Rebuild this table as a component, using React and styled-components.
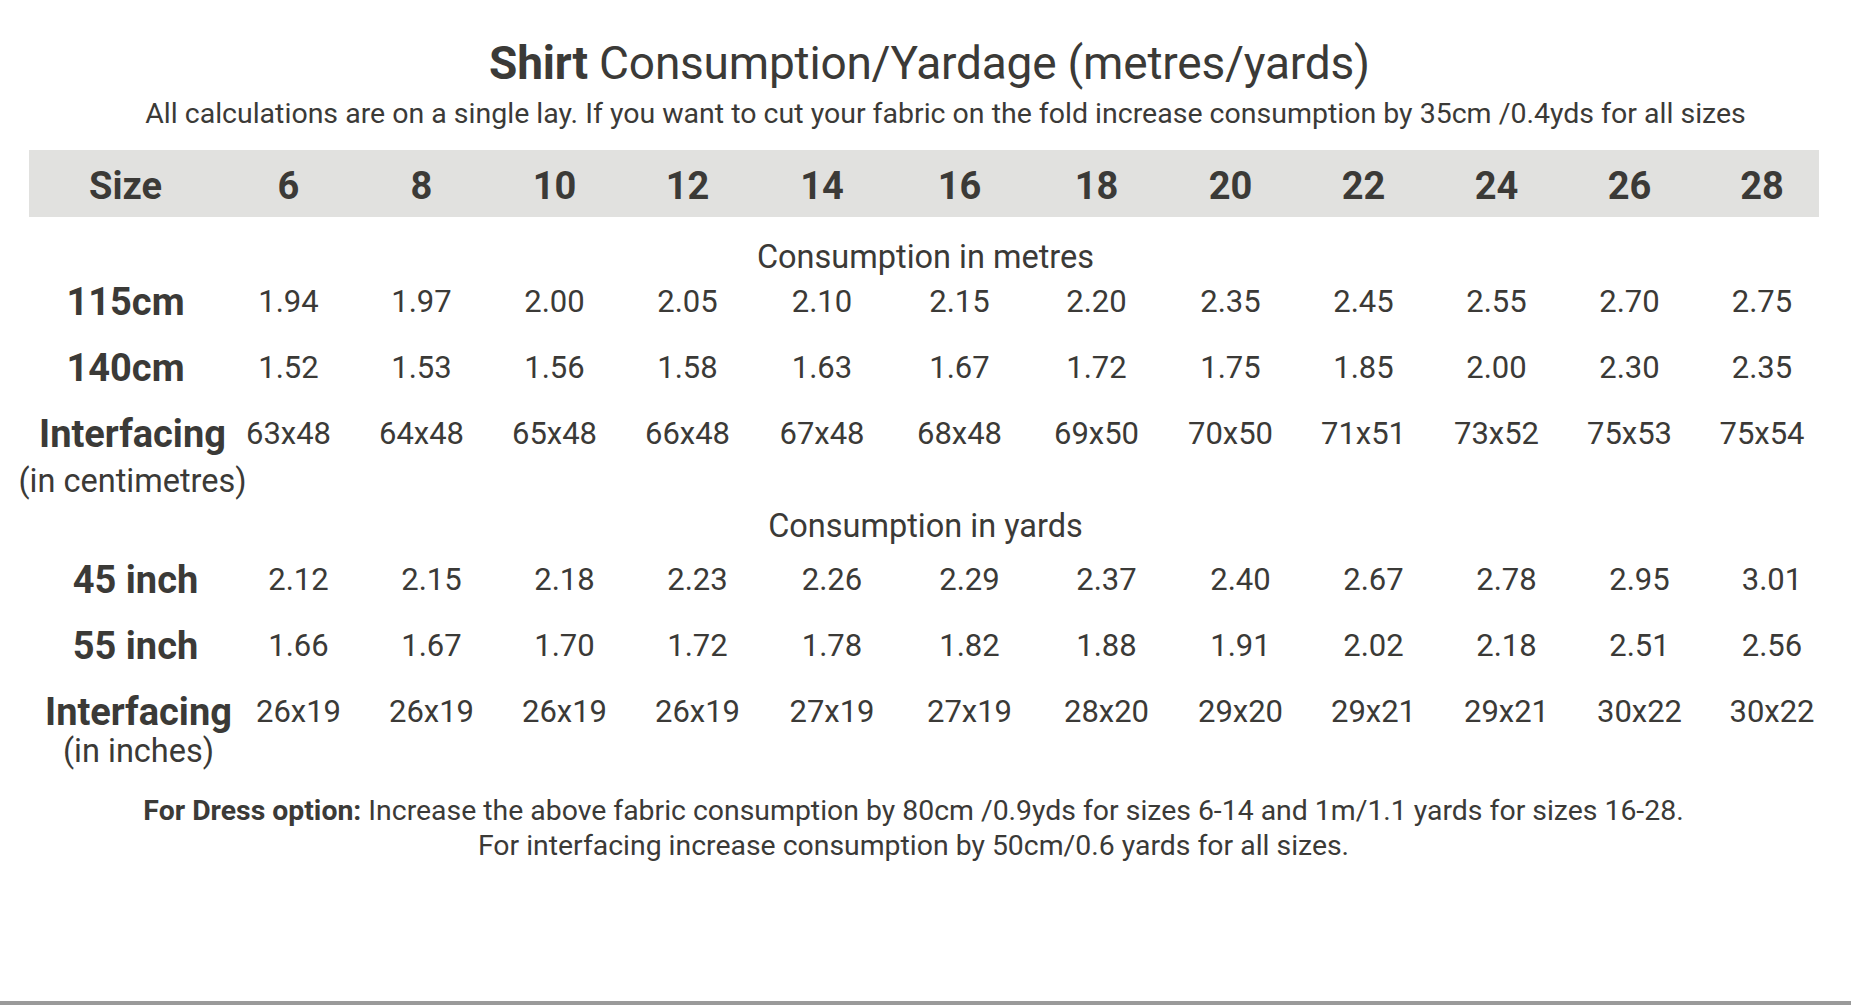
import React from 'react';
import styled, { createGlobalStyle } from 'styled-components';

const GlobalStyle = createGlobalStyle`
  html, body {
    margin: 0;
    padding: 0;
    background: #fff;
  }
  body {
    font-family: Roboto, "Liberation Sans", sans-serif;
    color: #3b3a37;
  }
`;

const sizes = [6, 8, 10, 12, 14, 16, 18, 20, 22, 24, 26, 28];
const colWidths = '193px 133px 133px 133px 133px 136px 139px 135px 133px 133px 133px 133px 132px';

const metres = [
  { label: '115cm', values: ['1.94', '1.97', '2.00', '2.05', '2.10', '2.15', '2.20', '2.35', '2.45', '2.55', '2.70', '2.75'] },
  { label: '140cm', values: ['1.52', '1.53', '1.56', '1.58', '1.63', '1.67', '1.72', '1.75', '1.85', '2.00', '2.30', '2.35'] },
  { label: 'Interfacing', sub: '(in centimetres)', nudge: 14, values: ['63x48', '64x48', '65x48', '66x48', '67x48', '68x48', '69x50', '70x50', '71x51', '73x52', '75x53', '75x54'] },
];

const yards = [
  { label: '45 inch', values: ['2.12', '2.15', '2.18', '2.23', '2.26', '2.29', '2.37', '2.40', '2.67', '2.78', '2.95', '3.01'] },
  { label: '55 inch', values: ['1.66', '1.67', '1.70', '1.72', '1.78', '1.82', '1.88', '1.91', '2.02', '2.18', '2.51', '2.56'] },
  { label: 'Interfacing', sub: '(in inches)', nudge: 6, values: ['26x19', '26x19', '26x19', '26x19', '27x19', '27x19', '28x20', '29x20', '29x21', '29x21', '30x22', '30x22'] },
];

const Page = styled.div`
  width: 1851px;
  height: 1005px;
  box-sizing: border-box;
  padding-top: 36px;
  border-bottom: 4px solid #9a9a9a;
  overflow: hidden;
`;

const Title = styled.h1`
  margin: 0;
  padding-left: 8px;
  text-align: center;
  font-size: 46px;
  line-height: 54px;
  font-weight: 400;
  letter-spacing: -0.2px;

  strong {
    font-weight: 700;
  }
`;

const Subtitle = styled.p`
  margin: 7px 0 0;
  padding-left: 40px;
  text-align: center;
  font-size: 28.5px;
  line-height: 34px;
  white-space: nowrap;
`;

const HeaderBand = styled.div`
  margin: 19px 0 0 29px;
  width: 1790px;
  height: 67px;
  background: #e1e1df;
  display: grid;
  grid-template-columns: ${colWidths};
`;

const HeadCell = styled.div`
  padding-top: 6px;
  text-align: center;
  font-size: 38px;
  line-height: 61px;
  font-weight: 700;
`;

const SectionTitle = styled.div`
  margin-top: ${(p) => p.$top}px;
  text-align: center;
  font-size: 32.5px;
  line-height: 30px;
`;

const Grid = styled.div`
  margin: ${(p) => p.$top}px 0 0 ${(p) => 29 + p.$shift}px;
  display: grid;
  grid-template-columns: ${colWidths};
  row-gap: 6px;
`;

const LabelCell = styled.div`
  display: flex;
  flex-direction: column;
  align-items: center;
  padding-left: ${(p) => p.$nudge || 0}px;
`;

const Label = styled.div`
  font-size: 38px;
  line-height: 60px;
  font-weight: 700;
  white-space: nowrap;
`;

const SubLabel = styled.div`
  margin-top: ${(p) => p.$pull}px;
  font-size: 32.5px;
  line-height: 34px;
  white-space: nowrap;
`;

const Value = styled.div`
  text-align: center;
  font-size: 31px;
  line-height: 60px;
  white-space: nowrap;
`;

const Footer = styled.div`
  margin-top: 25px;
  padding-right: 24px;
  text-align: center;
  font-size: 28.4px;
  line-height: 35px;

  p {
    margin: 0;
    white-space: nowrap;
  }

  strong {
    font-weight: 700;
  }
`;

function Section({ rows, shift, top, pull }) {
  return (
    <Grid $shift={shift} $top={top}>
      {rows.map((row) => (
        <React.Fragment key={row.label + row.values[0]}>
          <LabelCell $nudge={row.nudge}>
            <Label>{row.label}</Label>
            {row.sub && <SubLabel $pull={pull}>{row.sub}</SubLabel>}
          </LabelCell>
          {row.values.map((v, i) => (
            <Value key={i}>{v}</Value>
          ))}
        </React.Fragment>
      ))}
    </Grid>
  );
}

export default function App() {
  return (
    <>
      <GlobalStyle />
      <Page>
        <Title>
          <strong>Shirt</strong> Consumption/Yardage (metres/yards)
        </Title>
        <Subtitle>
          All calculations are on a single lay. If you want to cut your fabric on the fold increase consumption by 35cm /0.4yds for all sizes
        </Subtitle>

        <HeaderBand>
          <HeadCell>Size</HeadCell>
          {sizes.map((s) => (
            <HeadCell key={s}>{s}</HeadCell>
          ))}
        </HeaderBand>

        <SectionTitle $top={25}>Consumption in metres</SectionTitle>
        <Section rows={metres} shift={0} top={0} pull={0} />

        <SectionTitle $top={13}>Consumption in yards</SectionTitle>
        <Section rows={yards} shift={10} top={9} pull={-8} />

        <Footer>
          <p>
            <strong>For Dress option:</strong> Increase the above fabric consumption by 80cm /0.9yds for sizes 6-14 and 1m/1.1 yards for sizes 16-28.
          </p>
          <p>For interfacing increase consumption by 50cm/0.6 yards for all sizes.</p>
        </Footer>
      </Page>
    </>
  );
}
